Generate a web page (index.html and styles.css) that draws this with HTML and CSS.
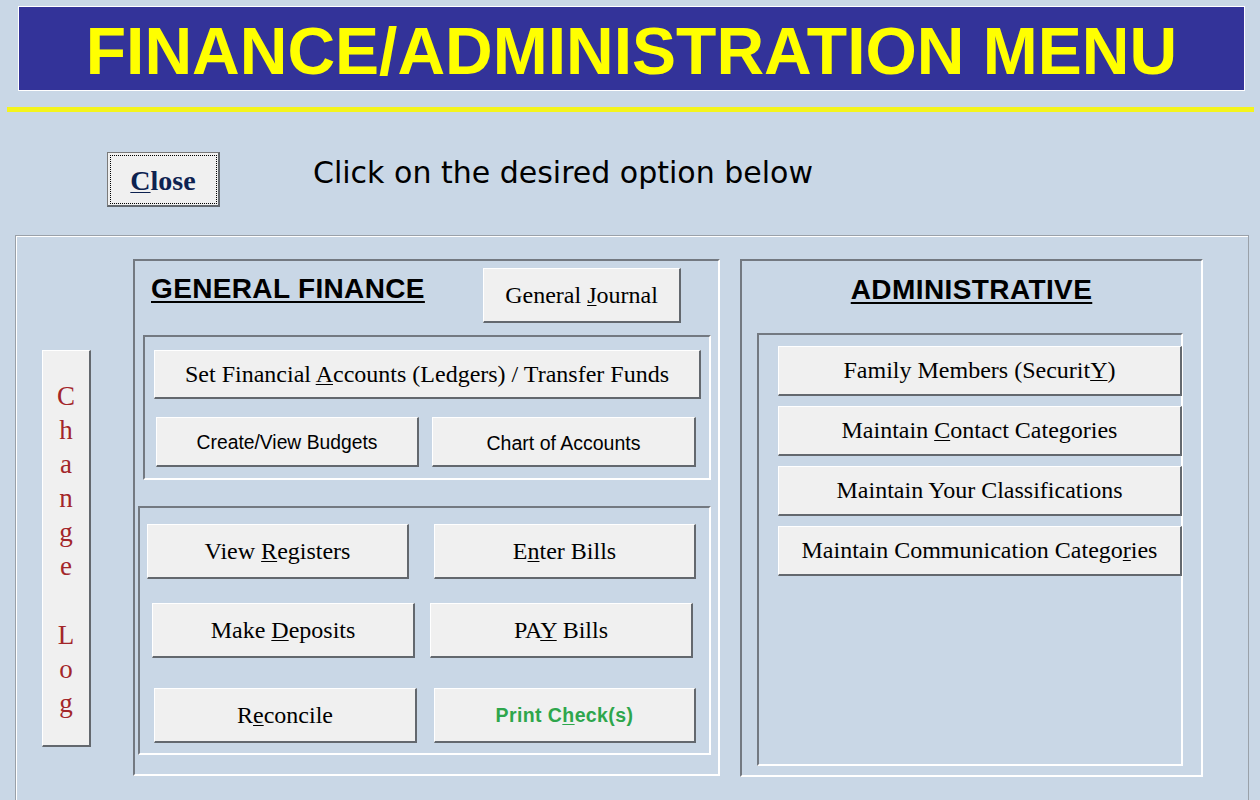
FILE: index.html
```html
<!DOCTYPE html>
<html lang="en">
<head>
<meta charset="utf-8">
<title>Finance/Administration Menu</title>
<link rel="stylesheet" href="styles.css">
</head>
<body>
<header class="banner">
  <h1 class="banner-title">FINANCE/ADMINISTRATION MENU</h1>
</header>
<div class="rule"></div>

<div class="toolbar">
  <button class="btn close-btn"><u>C</u>lose</button>
  <p class="prompt">Click on the desired option below</p>
</div>

<main class="main">
  <button class="btn changelog">
    <span>C</span><span>h</span><span>a</span><span>n</span><span>g</span><span>e</span><span>&nbsp;</span><span>L</span><span>o</span><span>g</span>
  </button>

  <section class="frame gf">
    <div class="gf-head">
      <h2 class="title">GENERAL FINANCE</h2>
      <button class="btn serif journal">General <u>J</u>ournal</button>
    </div>
    <div class="frame inner1">
      <button class="btn serif ledgers">Set Financial <u>A</u>ccounts (Ledgers) / Transfer Funds</button>
      <div class="pair pair-top">
        <button class="btn sans w263">Create/View Budgets</button>
        <button class="btn sans w264 chart">Chart of Accounts</button>
      </div>
    </div>
    <div class="frame inner2">
      <div class="pair row-a">
        <button class="btn serif tall w262">View <u>R</u>egisters</button>
        <button class="btn serif tall w262">E<u>n</u>ter Bills</button>
      </div>
      <div class="pair row-b">
        <button class="btn serif tall w263">Make <u>D</u>eposits</button>
        <button class="btn serif tall w263">PA<u>Y</u> Bills</button>
      </div>
      <div class="pair row-c">
        <button class="btn serif tall w263">R<u>e</u>concile</button>
        <button class="btn sans-bold tall w262">Print C<u>h</u>eck(s)</button>
      </div>
    </div>
  </section>

  <section class="frame admin">
    <h2 class="title centered">ADMINISTRATIVE</h2>
    <div class="frame admin-inner">
      <button class="btn serif admin-btn">Family Members (Securit<u>Y</u>)</button>
      <button class="btn serif admin-btn">Maintain <u>C</u>ontact Categories</button>
      <button class="btn serif admin-btn">Maintain Your Classifications</button>
      <button class="btn serif admin-btn">Maintain Communication Catego<u>r</u>ies</button>
    </div>
  </section>
</main>
</body>
</html>
```

FILE: styles.css
```css
html, body {
  margin: 0;
  padding: 0;
  height: 800px;
  overflow: hidden;
}

body {
  background: #c9d7e6;
  font-family: "Liberation Sans", Arial, sans-serif;
  color: #000;
}

* {
  box-sizing: border-box;
}

/* Header banner */
.banner {
  margin: 6px 0 0 18px;
  width: 1227px;
  height: 85px;
  background: #333399;
  border: 1px solid #ffffff;
  padding-top: 11px;
}

.banner-title {
  margin: 0;
  font-family: "Liberation Sans", Arial, sans-serif;
  font-weight: bold;
  font-size: 66px;
  line-height: 66px;
  color: #ffff00;
  text-align: center;
  letter-spacing: 0;
}

.rule {
  margin: 16px 0 0 7px;
  width: 1247px;
  height: 5px;
  background: #f4f41c;
}

/* Toolbar */
.toolbar {
  display: flex;
  align-items: flex-start;
  margin-top: 40px;
}

.btn {
  display: block;
  padding: 0;
  margin: 0;
  background: #f0f0f0;
  border-top: 1px solid #ffffff;
  border-left: 1px solid #ffffff;
  border-right: 2px solid #63686e;
  border-bottom: 2px solid #63686e;
  color: #000;
  text-align: center;
  cursor: default;
}

.btn u {
  text-decoration-thickness: 1px;
  text-underline-offset: 2px;
}

.close-btn {
  margin-left: 107px;
  width: 113px;
  height: 55px;
  border: 1px solid #7a7a7a;
  border-right: 2px solid #63686e;
  border-bottom: 2px solid #63686e;
  outline: 1px dotted #000;
  outline-offset: -4px;
  font-family: "Liberation Serif", "Times New Roman", serif;
  font-weight: bold;
  font-size: 28px;
  color: #0d2250;
  padding-top: 3px;
}

.prompt {
  margin: 3px 0 0 93px;
  font-family: "DejaVu Sans", Verdana, sans-serif;
  font-size: 30px;
  line-height: 36px;
}

/* Main outer frame */
.main {
  display: flex;
  align-items: flex-start;
  margin: 28px 0 0 15px;
  width: 1234px;
  height: 600px;
  border: 1px solid #9aa1a9;
  box-shadow: inset 1px 1px 0 #ffffff;
}

.changelog {
  margin: 114px 0 0 26px;
  width: 49px;
  height: 397px;
  padding-top: 28px;
  display: flex;
  flex-direction: column;
  align-items: center;
  justify-content: flex-start;
  font-family: "Liberation Serif", "Times New Roman", serif;
  font-size: 27px;
  color: #a3262a;
}

.changelog span {
  display: block;
  line-height: 34.1px;
  height: 34.1px;
}

/* Sunken frames */
.frame {
  border-top: 2px solid #737981;
  border-left: 2px solid #737981;
  border-right: 2px solid #ffffff;
  border-bottom: 2px solid #ffffff;
  flex-shrink: 0;
}

.gf {
  margin: 23px 0 0 42px;
  width: 587px;
  height: 517px;
}

.gf-head {
  display: flex;
  align-items: flex-start;
  margin-top: 7px;
  height: 55px;
  padding-left: 16px;
}

.title {
  margin: 5px 0 0 0;
  font-family: "Liberation Sans", Arial, sans-serif;
  font-weight: bold;
  font-size: 28px;
  line-height: 32px;
  letter-spacing: 0.35px;
  text-decoration: underline;
  text-decoration-thickness: 2px;
  text-underline-offset: 3px;
}

.title.centered {
  margin-top: 13px;
  text-align: center;
  letter-spacing: 0.4px;
}

.serif {
  font-family: "Liberation Serif", "Times New Roman", serif;
  font-size: 24px;
}

.sans {
  font-family: "Liberation Sans", Arial, sans-serif;
  font-size: 19.3px;
  padding-top: 3px;
}

.sans-bold {
  font-family: "Liberation Sans", Arial, sans-serif;
  font-weight: bold;
  font-size: 19.5px;
  letter-spacing: 0.4px;
  color: #2ea64c;
}

.sans-bold u {
  text-underline-offset: 2px;
}

.journal {
  margin-left: auto;
  margin-right: 37px;
  width: 198px;
  height: 55px;
}

.inner1 {
  margin: 12px 0 0 8px;
  width: 568px;
  height: 145px;
}

.ledgers {
  margin: 13px 0 0 9px;
  width: 547px;
  height: 49px;
}

.pair {
  display: flex;
  align-items: flex-start;
}

.pair-top {
  margin-top: 18px;
  padding-left: 11px;
  gap: 13px;
}

.pair-top .btn {
  height: 50px;
}

.chart {
  font-size: 19.5px;
}

.w262 { width: 262px; }
.w263 { width: 263px; }
.w264 { width: 264px; }

.tall {
  height: 55px;
}

.inner2 {
  margin: 26px 0 0 3px;
  width: 573px;
  height: 249px;
}

.row-a {
  margin-top: 16px;
  padding-left: 7px;
  gap: 25px;
}

.row-b {
  margin-top: 24px;
  padding-left: 12px;
  gap: 15px;
}

.row-c {
  margin-top: 30px;
  padding-left: 14px;
  gap: 17px;
}

/* Administrative */
.admin {
  margin: 23px 0 0 20px;
  width: 463px;
  height: 518px;
}

.admin-inner {
  margin: 27px 0 0 15px;
  width: 426px;
  height: 433px;
  padding-top: 11px;
  display: flex;
  flex-direction: column;
  gap: 10px;
}

.admin-btn {
  margin-left: 19px;
  width: 404px;
  height: 50px;
  flex-shrink: 0;
}
```
